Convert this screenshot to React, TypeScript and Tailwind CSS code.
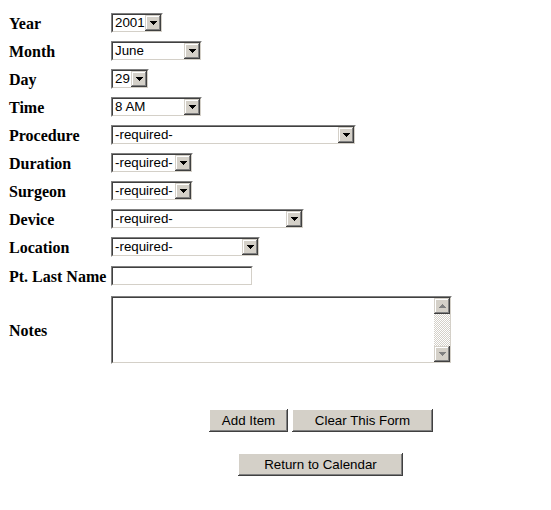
import React from 'react';

const Arrow: React.FC<{ color?: string }> = ({ color = '#000000' }) => (
  <svg width="7" height="4" viewBox="0 0 7 4" shapeRendering="crispEdges">
    <path d="M0 0h7v1H0zM1 1h5v1H1zM2 2h3v1H2zM3 3h1v1H3z" fill={color} />
  </svg>
);

const ArrowUp: React.FC<{ color?: string }> = ({ color = '#808080' }) => (
  <svg width="7" height="4" viewBox="0 0 7 4" shapeRendering="crispEdges">
    <path d="M3 0h1v1H3zM2 1h3v1H2zM1 2h5v1H1zM0 3h7v1H0z" fill={color} />
  </svg>
);

const RaisedBox: React.FC<{ children: React.ReactNode }> = ({ children }) => (
  <div className="flex h-4 w-4 shrink-0 items-center justify-center bg-[#d4d0c8] shadow-[inset_-1px_-1px_0_#404040,inset_1px_1px_0_#d4d0c8,inset_-2px_-2px_0_#808080,inset_2px_2px_0_#ffffff]">
    {children}
  </div>
);

// sunken win2k style frame
const Sunken: React.FC<{ className: string; children?: React.ReactNode }> = ({ className, children }) => (
  <div className={`border border-t-[#808080] border-l-[#808080] border-r-white border-b-white ${className}`}>
    <div className="flex h-full w-full border border-t-[#404040] border-l-[#404040] border-r-[#d4d0c8] border-b-[#d4d0c8] bg-white">
      {children}
    </div>
  </div>
);

const Select: React.FC<{ w: string; value: string }> = ({ w, value }) => (
  <Sunken className={`h-5 ${w}`}>
    <span className="flex-1 overflow-hidden whitespace-nowrap pl-[2px] font-['Liberation_Sans',Arial,sans-serif] text-[13.33px] leading-4 text-black">
      {value}
    </span>
    <RaisedBox>
      <Arrow />
    </RaisedBox>
  </Sunken>
);

const Row: React.FC<{ label: string; className?: string; children: React.ReactNode }> = ({ label, className = '', children }) => (
  <div className={`flex items-center ${className}`}>
    <div className="w-[102px] whitespace-nowrap pt-[2px] text-[16px] font-bold leading-4 text-black">{label}</div>
    {children}
  </div>
);

const Button: React.FC<{ w: string; label: string }> = ({ w, label }) => (
  <button
    className={`h-[23px] ${w} bg-[#d4d0c8] font-['Liberation_Sans',Arial,sans-serif] text-[13.33px] leading-none text-black shadow-[inset_-1px_-1px_0_#404040,inset_1px_1px_0_#ffffff,inset_-2px_-2px_0_#808080,inset_2px_2px_0_#d4d0c8]`}
  >
    {label}
  </button>
);

const App: React.FC = () => {
  const selects = [
    { label: 'Year', w: 'w-[52px]', value: '2001' },
    { label: 'Month', w: 'w-[91px]', value: 'June' },
    { label: 'Day', w: 'w-[38px]', value: '29' },
    { label: 'Time', w: 'w-[91px]', value: '8 AM' },
    { label: 'Procedure', w: 'w-[245px]', value: '-required-' },
    { label: 'Duration', w: 'w-[82px]', value: '-required-' },
    { label: 'Surgeon', w: 'w-[82px]', value: '-required-' },
    { label: 'Device', w: 'w-[193px]', value: '-required-' },
    { label: 'Location', w: 'w-[149px]', value: '-required-' },
  ];

  return (
    <div className="min-h-[510px] bg-white pl-[9px] pt-[13px] font-['Liberation_Serif',serif]">
      <div className="flex flex-col gap-2">
        {selects.map((s) => (
          <Row key={s.label} label={s.label}>
            <Select w={s.w} value={s.value} />
          </Row>
        ))}
        <Row label="Pt. Last Name" className="mt-px">
          <Sunken className="h-5 w-[142px]" />
        </Row>
        <Row label="Notes" className="mt-[2px]">
          <Sunken className="h-[68px] w-[341px]">
            <div className="flex-1" />
            <div className="flex w-4 flex-col">
              <RaisedBox>
                <ArrowUp />
              </RaisedBox>
              <div className="flex-1 bg-[image:repeating-conic-gradient(#d4d0c8_0_25%,#ffffff_0_50%)] bg-[length:2px_2px]" />
              <RaisedBox>
                <Arrow color="#808080" />
              </RaisedBox>
            </div>
          </Sunken>
        </Row>
      </div>

      <div className="mt-[45px] flex gap-1 pl-[200px]">
        <Button w="w-[79px]" label="Add Item" />
        <Button w="w-[141px]" label="Clear This Form" />
      </div>
      <div className="mt-5 pl-[229px]">
        <Button w="w-[165px]" label="Return to Calendar" />
      </div>
    </div>
  );
};

export default App;
